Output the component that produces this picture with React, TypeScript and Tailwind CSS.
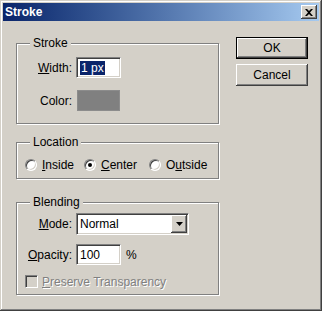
import React from 'react'

const font = { fontFamily: '"Liberation Sans", Arial, sans-serif' }

const sunken =
  'border border-t-[#808080] border-l-[#808080] border-b-white border-r-white shadow-[inset_1px_1px_0_#404040,inset_-1px_-1px_0_#d4d0c8]'
const raised =
  'shadow-[inset_-1px_-1px_0_#404040,inset_1px_1px_0_#fff,inset_-2px_-2px_0_#808080,inset_2px_2px_0_#d4d0c8]'

function Group({ label, className, children }: { label: string; className: string; children: React.ReactNode }) {
  return (
    <div className={`relative border border-[#808080] shadow-[1px_1px_0_#fff,inset_1px_1px_0_#fff] ${className}`}>
      <span className="absolute left-[13px] top-[-8px] bg-[#d4d0c8] px-[3px] leading-[14px]">{label}</span>
      {children}
    </div>
  )
}

function Radio({ checked }: { checked?: boolean }) {
  return (
    <span className="relative w-[12px] h-[12px] rounded-full bg-white border border-t-[#808080] border-l-[#808080] border-b-white border-r-white shadow-[inset_1px_1px_0_#404040,inset_-1px_-1px_0_#d4d0c8] flex items-center justify-center shrink-0">
      {checked && <span className="w-[4px] h-[4px] rounded-full bg-black" />}
    </span>
  )
}

export default function App() {
  return (
    <div
      style={font}
      className="w-[322px] h-[311px] bg-[#d4d0c8] text-[12px] text-black flex flex-col p-[3px] shadow-[inset_-1px_-1px_0_#404040,inset_1px_1px_0_#d4d0c8,inset_-2px_-2px_0_#808080,inset_2px_2px_0_#fff] select-none"
    >
      {/* Title bar */}
      <div className="h-[18px] bg-linear-to-r from-[#0a246a] to-[#a6caf0] flex items-center pl-[2px] pr-[2px]">
        <span className="text-white font-bold text-[12px] flex-1">Stroke</span>
        <div className={`w-[16px] h-[14px] bg-[#d4d0c8] flex items-center justify-center ${raised}`}>
          <svg width="8" height="7" viewBox="0 0 8 7">
            <path d="M0 0h2l2 2 2-2h2L5 3.5 8 7H6L4 5 2 7H0l3-3.5z" fill="#000" />
          </svg>
        </div>
      </div>

      {/* Body */}
      <div className="flex flex-row pl-[13px]">
        <div className="w-[203px] flex flex-col pt-[22px]">
          <Group label="Stroke" className="h-[81px]">
            <div className="flex items-center mt-[13px] h-[21px]">
              <span className="w-[55px] text-right"><u>W</u>idth:</span>
              <div className={`ml-[4px] w-[45px] h-[21px] bg-white flex items-center pl-[3px] ${sunken}`}>
                <span className="bg-[#0a246a] text-white leading-[14px] px-[1px]">1 px</span>
              </div>
            </div>
            <div className="flex items-center mt-[12px] h-[21px]">
              <span className="w-[55px] text-right">Color:</span>
              <div className="ml-[5px] w-[43px] h-[21px] bg-[#808080] border border-[#8c8c8c]" />
            </div>
          </Group>

          <Group label="Location" className="h-[37px] mt-[18px]">
            <div className="flex items-center mt-[16px] pl-[8px] h-[12px]">
              <div className="w-[59px] flex items-center gap-[5px]">
                <Radio />
                <span><u>I</u>nside</span>
              </div>
              <div className="w-[65px] flex items-center gap-[5px]">
                <Radio checked />
                <span><u>C</u>enter</span>
              </div>
              <div className="flex items-center gap-[5px]">
                <Radio />
                <span>O<u>u</u>tside</span>
              </div>
            </div>
          </Group>

          <Group label="Blending" className="h-[93px] mt-[23px]">
            <div className="flex items-center mt-[10px] h-[22px]">
              <span className="w-[55px] text-right"><u>M</u>ode:</span>
              <div className={`ml-[4px] w-[113px] h-[22px] bg-white flex items-center ${sunken}`}>
                <span className="flex-1 pl-[3px]">Normal</span>
                <div className={`w-[16px] h-[18px] mr-[1px] bg-[#d4d0c8] flex items-center justify-center ${raised}`}>
                  <svg width="7" height="4" viewBox="0 0 7 4">
                    <path d="M0 0h7L3.5 4z" fill="#000" />
                  </svg>
                </div>
              </div>
            </div>
            <div className="flex items-center mt-[9px] h-[21px]">
              <span className="w-[55px] text-right"><u>O</u>pacity:</span>
              <div className={`ml-[4px] w-[45px] h-[21px] bg-white flex items-center pl-[3px] ${sunken}`}>100</div>
              <span className="ml-[5px]">%</span>
            </div>
            <div className="flex items-center mt-[10px] pl-[8px] h-[13px]">
              <span className={`w-[13px] h-[13px] bg-[#d4d0c8] ${sunken}`} />
              <span className="ml-[4px] text-[#808080] [text-shadow:1px_1px_0_#fff]">
                <u>P</u>reserve Transparency
              </span>
            </div>
          </Group>
        </div>

        {/* Buttons */}
        <div className="ml-[17px] pt-[16px] flex flex-col gap-[5px]">
          <button className="w-[72px] h-[22px] border border-black bg-[#d4d0c8] p-0">
            <div className={`w-full h-full flex items-center justify-center ${raised}`}>OK</div>
          </button>
          <button className={`w-[72px] h-[22px] bg-[#d4d0c8] flex items-center justify-center ${raised}`}>Cancel</button>
        </div>
      </div>
    </div>
  )
}
